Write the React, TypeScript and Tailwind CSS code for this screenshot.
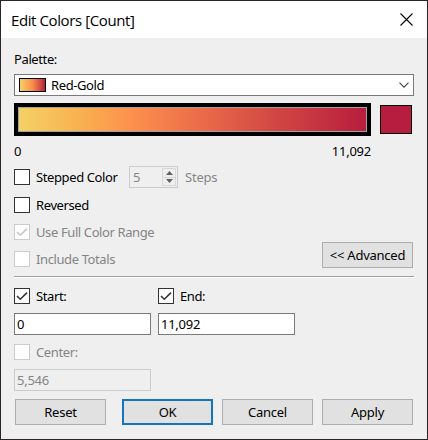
import type { ReactNode } from "react";

function Check({ checked = false, disabled = false }: { checked?: boolean; disabled?: boolean }) {
  return (
    <span
      className={`flex size-4 shrink-0 items-center justify-center border bg-white ${
        disabled ? "border-[#cccccc] text-[#c4c4c4]" : "border-[#333333] text-[#333333]"
      }`}
    >
      {checked && (
        <svg width="14" height="14" viewBox="0 0 14 14" fill="none" stroke="currentColor" strokeWidth="1.5">
          <path d="M2 7 L5.3 10.3 L12 3.6" />
        </svg>
      )}
    </span>
  );
}

function CheckRow({
  children,
  className = "",
  checked,
  disabled,
}: {
  children: ReactNode;
  className?: string;
  checked?: boolean;
  disabled?: boolean;
}) {
  return (
    <label className={`flex h-4 items-center gap-1.5 ${className}`}>
      <Check checked={checked} disabled={disabled} />
      <span className={`whitespace-nowrap ${disabled ? "text-[#858585]" : ""}`}>{children}</span>
    </label>
  );
}

function Button({ children, primary = false }: { children: ReactNode; primary?: boolean }) {
  return (
    <button
      className={`flex h-[26px] w-[91px] items-center justify-center whitespace-nowrap bg-[#e1e1e1] tracking-[-0.25px] ${
        primary ? "border-2 border-[#1474bd]" : "border border-[#adadad]"
      }`}
    >
      {children}
    </button>
  );
}

function Field({ value, disabled = false }: { value: string; disabled?: boolean }) {
  return (
    <div
      className={`flex h-[22px] w-[137px] items-center border pl-[2px] tracking-[-0.25px] ${
        disabled ? "border-[#cccccc] bg-[#efefef] text-[#858585]" : "border-[#7a7a7a] bg-white"
      }`}
    >
      {value}
    </div>
  );
}

export default function App() {
  return (
    <div className="flex h-[440px] w-[428px] flex-col border border-[#2b2326] bg-[#efefef] font-['Noto_Sans',sans-serif] text-[13px] leading-4 tracking-[-0.39px] text-black">
      <header className="flex h-[37px] shrink-0 items-center justify-between bg-white pr-[14px] pl-[10px]">
        <h1 className="font-['Open_Sans',sans-serif] text-[15px] leading-5 tracking-[-0.4px]">Edit Colors [Count]</h1>
        <svg width="13" height="13" viewBox="0 0 13 13" stroke="#000" strokeWidth="1.1">
          <path d="M.5 .5 L12.5 12.5 M12.5 .5 L.5 12.5" />
        </svg>
      </header>

      <main className="flex flex-col pl-[13px]">
        <div className="mt-[13px] h-4">Palette:</div>

        <div className="mt-[7px] flex h-[22px] w-[400px] items-center border border-[#7a7a7a] bg-white pr-1 pl-1">
          <span className="h-[14px] w-[27px] border border-black bg-linear-to-r from-[#f4d166] via-[#f98c4c] to-[#b71d3e]" />
          <span className="ml-[5px] flex-1">Red-Gold</span>
          <svg width="10" height="6" viewBox="0 0 10 6" fill="none" stroke="#444" strokeWidth="1.1">
            <path d="M.5 .7 L5 5.2 L9.5 .7" />
          </svg>
        </div>

        <div className="mt-[7px] flex items-center gap-[9px]">
          <div className="h-[33px] w-[357px] border-4 border-black">
            <div className="h-full w-full border border-[#a0a0a0] bg-[linear-gradient(90deg,#f4d166_0%,#f9b04f_18%,#fd914e_32%,#e96949_54%,#d34a44_72%,#b71d3e_100%)]" />
          </div>
          <div className="h-[29px] w-8 border border-black bg-[#b71d3e]" />
        </div>

        <div className="mt-[7px] flex h-4 w-[357px] justify-between tracking-[-0.25px]">
          <span>0</span>
          <span>11,092</span>
        </div>

        <div className="mt-[7px] flex h-[22px] items-center">
          <CheckRow className="w-[115px]">Stepped Color</CheckRow>
          <div className="flex h-[22px] w-[49px] items-center justify-between border border-[#cccccc] pr-px pl-[3px] text-[#858585]">
            <span>5</span>
            <div className="flex h-[18px] w-[14px] flex-col border border-[#d8d8d8]">
              <span className="flex flex-1 items-center justify-center border-b border-[#d8d8d8]">
                <svg width="7" height="4" viewBox="0 0 7 4" fill="#606060">
                  <path d="M0 4 L3.5 0 L7 4Z" />
                </svg>
              </span>
              <span className="flex flex-1 items-center justify-center">
                <svg width="7" height="4" viewBox="0 0 7 4" fill="#606060">
                  <path d="M0 0 L3.5 4 L7 0Z" />
                </svg>
              </span>
            </div>
          </div>
          <span className="ml-[7px] tracking-[-0.2px] text-[#858585]">Steps</span>
        </div>

        <div className="mt-[9px] flex h-[71px] w-[399px] items-end justify-between">
          <div className="flex flex-col gap-[11px] pb-px">
            <CheckRow>Reversed</CheckRow>
            <CheckRow checked disabled>
              Use Full Color Range
            </CheckRow>
            <CheckRow disabled>Include Totals</CheckRow>
          </div>
          <Button>&lt;&lt; Advanced</Button>
        </div>

        <div className="mt-2 h-[2px] w-[400px] border-t border-b border-t-[#a0a0a0] border-b-white" />

        <div className="mt-[10px] flex gap-[7px]">
          <div className="flex flex-col">
            <CheckRow checked>Start:</CheckRow>
            <div className="mt-[9px]">
              <Field value="0" />
            </div>
            <CheckRow disabled className="mt-[9px]">
              Center:
            </CheckRow>
            <div className="mt-[9px]">
              <Field value="5,546" disabled />
            </div>
          </div>
          <div className="flex flex-col">
            <CheckRow checked>End:</CheckRow>
            <div className="mt-[9px]">
              <Field value="11,092" />
            </div>
          </div>
        </div>

        <footer className="mt-2 ml-px flex gap-[9px]">
          <span className="mr-[7px]">
            <Button>Reset</Button>
          </span>
          <Button primary>OK</Button>
          <Button>Cancel</Button>
          <Button>Apply</Button>
        </footer>
      </main>
    </div>
  );
}
